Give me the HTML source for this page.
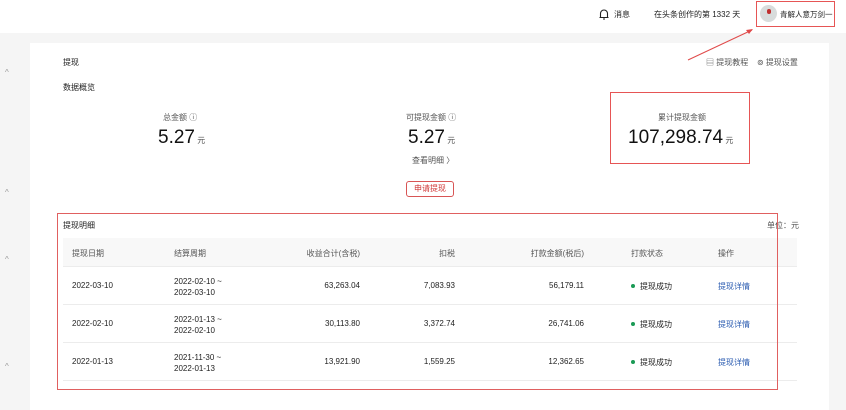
<!DOCTYPE html>
<html><head><meta charset="utf-8"><style>
*{margin:0;padding:0;box-sizing:border-box}
body{width:846px;height:410px;background:#f5f5f5;font-family:"Liberation Sans","Noto Sans CJK SC",sans-serif;color:#222;position:relative;overflow:hidden;font-size:8px}
.a{position:absolute;white-space:nowrap}
.top{position:absolute;left:0;top:0;width:846px;height:33px;background:#fff}
.card{position:absolute;left:30px;top:43px;width:799px;height:367px;background:#fff}
.red{position:absolute;border:1px solid #e65555;z-index:5}
.rl{position:absolute;background:#e06060;z-index:7}
.th{position:absolute;left:63px;top:238px;width:734px;height:28px;background:#f8f8f8}
.line{position:absolute;left:63px;width:734px;height:1px;background:#ececec}
.num{font-size:19px;color:#111}
.dot{display:inline-block;width:4px;height:4px;border-radius:50%;background:#1a9a55;margin-right:5px;vertical-align:1px}
.lk{color:#2a5bb0}
.g{color:#555}
</style></head><body>
<div class="top"></div>
<div class="card"></div>
<svg class="a" style="left:598px;top:8px" width="12" height="12" viewBox="0 0 12 12"><path d="M2.5 9V5.5a3.5 3.5 0 0 1 7 0V9M1.5 9.5h9M5 11h2" fill="none" stroke="#222" stroke-width="1.1"/></svg>
<div class="a" style="left:614px;top:9px">消息</div>
<div class="a" style="left:654px;top:9px">在头条创作的第 1332 天</div>
<div class="a" style="left:760px;top:5px;width:17px;height:17px;border-radius:50%;background:#d8dcdc"></div>
<div class="a" style="left:767px;top:9px;width:4px;height:5px;background:#c03030;border-radius:2px"></div>
<div class="a" style="left:780px;top:9px;font-size:7.5px">青解人意万剑一</div>
<div class="red" style="left:756px;top:1px;width:79px;height:26px"></div>
<svg class="a" style="left:680px;top:25px;z-index:6" width="80" height="40"><line x1="8" y1="35" x2="72" y2="5" stroke="#e04a4a" stroke-width="1"/><path d="M73 4l-7 1 3 4z" fill="#e04a4a"/></svg>
<div class="a g" style="left:5px;top:68px;color:#999">^</div>
<div class="a g" style="left:5px;top:188px;color:#999">^</div>
<div class="a g" style="left:5px;top:255px;color:#999">^</div>
<div class="a g" style="left:5px;top:362px;color:#999">^</div>
<div class="a" style="left:63px;top:57px">提现</div>
<div class="a" style="left:63px;top:82px">数据概览</div>
<div class="a g" style="left:706px;top:57px">▤ 提现教程</div>
<div class="a g" style="left:757px;top:57px">⊚ 提现设置</div>
<div class="a g" style="left:163px;top:112px">总金额 ⓘ</div>
<div class="a" style="left:158px;top:127px"><span class="num">5.27</span> <span class="g">元</span></div>
<div class="a g" style="left:406px;top:112px">可提现金额 ⓘ</div>
<div class="a" style="left:408px;top:127px"><span class="num">5.27</span> <span class="g">元</span></div>
<div class="a g" style="left:412px;top:155px">查看明细 〉</div>
<div class="a" style="left:406px;top:181px;width:48px;height:16px;border:1px solid #d85555;border-radius:3px;color:#d03a3a;text-align:center;line-height:14px">申请提现</div>
<div class="red" style="left:610px;top:92px;width:140px;height:72px"></div>
<div class="a g" style="left:658px;top:112px">累计提现金额</div>
<div class="a" style="left:628px;top:127px"><span class="num">107,298.74</span> <span class="g">元</span></div>
<div class="a" style="left:63px;top:220px">提现明细</div>
<div class="a g" style="left:767px;top:220px">单位：元</div>
<div class="th"></div>
<div class="line" style="top:266px"></div>
<div class="line" style="top:304px"></div>
<div class="line" style="top:342px"></div>
<div class="line" style="top:380px"></div>
<div class="a g" style="left:72px;top:248px">提现日期</div>
<div class="a g" style="left:174px;top:248px">结算周期</div>
<div class="a g" style="right:486px;top:248px">收益合计(含税)</div>
<div class="a g" style="right:391px;top:248px">扣税</div>
<div class="a g" style="right:262px;top:248px">打款金额(税后)</div>
<div class="a g" style="left:631px;top:248px">打款状态</div>
<div class="a g" style="left:718px;top:248px">操作</div>

<div class="a" style="left:72px;top:281px">2022-03-10</div>
<div class="a" style="left:174px;top:276px;line-height:11px">2022-02-10 ~<br>2022-03-10</div>
<div class="a" style="right:486px;top:281px">63,263.04</div>
<div class="a" style="right:391px;top:281px">7,083.93</div>
<div class="a" style="right:262px;top:281px">56,179.11</div>
<div class="a" style="left:631px;top:281px"><span class="dot"></span>提现成功</div>
<div class="a lk" style="left:718px;top:281px">提现详情</div>

<div class="a" style="left:72px;top:319px">2022-02-10</div>
<div class="a" style="left:174px;top:314px;line-height:11px">2022-01-13 ~<br>2022-02-10</div>
<div class="a" style="right:486px;top:319px">30,113.80</div>
<div class="a" style="right:391px;top:319px">3,372.74</div>
<div class="a" style="right:262px;top:319px">26,741.06</div>
<div class="a" style="left:631px;top:319px"><span class="dot"></span>提现成功</div>
<div class="a lk" style="left:718px;top:319px">提现详情</div>

<div class="a" style="left:72px;top:357px">2022-01-13</div>
<div class="a" style="left:174px;top:352px;line-height:11px">2021-11-30 ~<br>2022-01-13</div>
<div class="a" style="right:486px;top:357px">13,921.90</div>
<div class="a" style="right:391px;top:357px">1,559.25</div>
<div class="a" style="right:262px;top:357px">12,362.65</div>
<div class="a" style="left:631px;top:357px"><span class="dot"></span>提现成功</div>
<div class="a lk" style="left:718px;top:357px">提现详情</div>
<div class="rl" style="left:57px;top:213px;width:721px;height:1px"></div>
<div class="rl" style="left:57px;top:389px;width:721px;height:1px"></div>
<div class="rl" style="left:57px;top:213px;width:1px;height:177px"></div>
<div class="rl" style="left:777px;top:213px;width:1px;height:177px"></div>
</body></html>
